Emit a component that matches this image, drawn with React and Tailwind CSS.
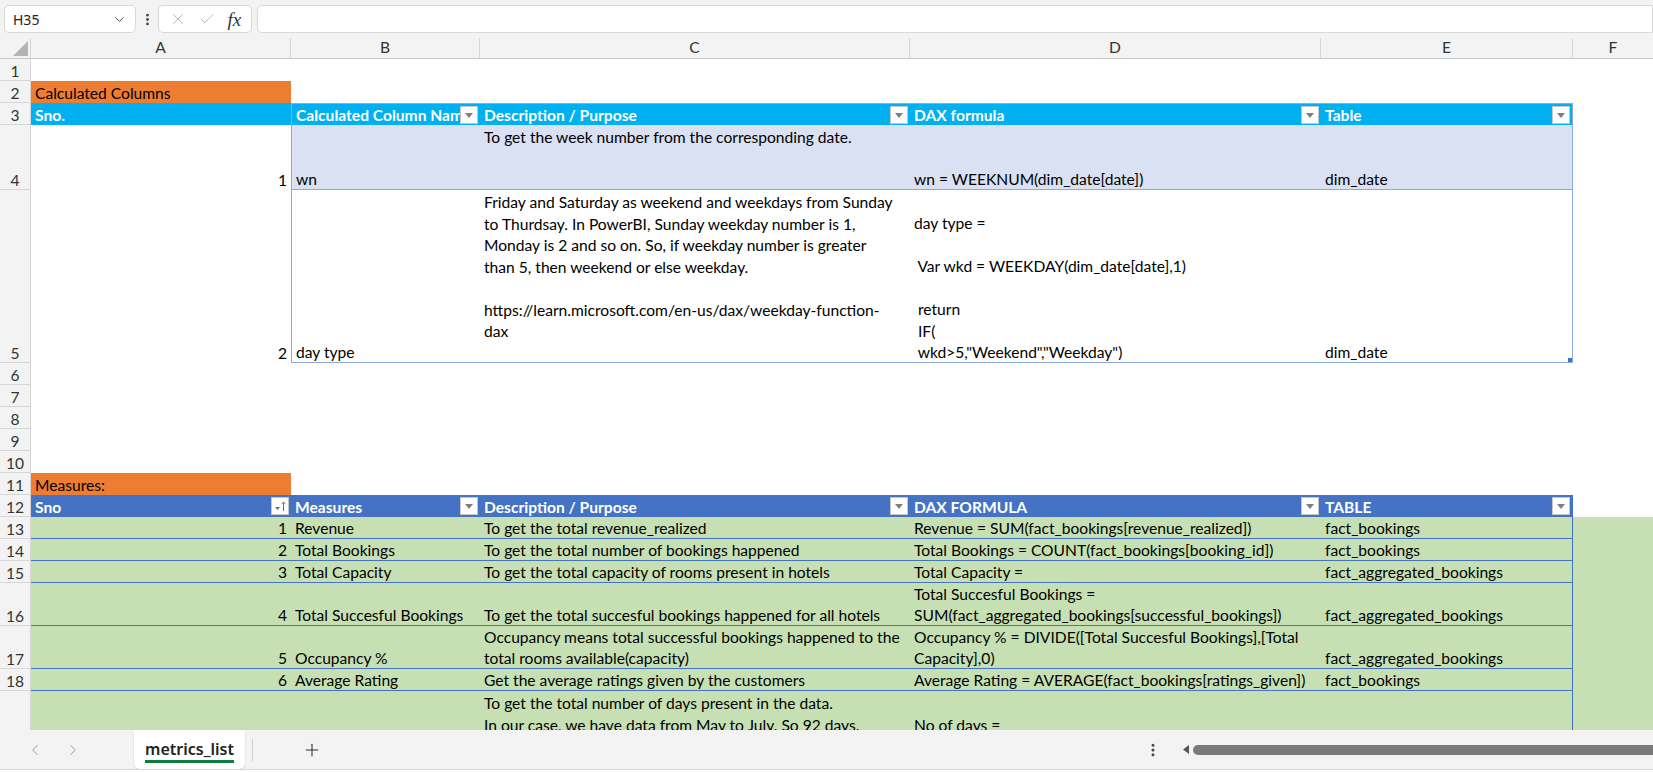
import React from 'react';
import { ChevronDown, EllipsisVertical, X, Check, ChevronLeft, ChevronRight, Plus } from 'lucide-react';

const cellFont = "font-['Lato',sans-serif] text-[15.6px]";

function FilterBtn({ sort }) {
  return (
    <span className="absolute right-[2px] top-[2px] w-[18px] h-[18px] bg-white border border-[#c6c6c6] flex items-center justify-center">
      {sort ? (
        <svg width="14" height="14" viewBox="0 0 14 14">
          <path d="M2 8h5l-2.5 3z" fill="#6f6f6f" />
          <path d="M10.5 12V3M8.8 4.8l1.7-1.8 1.7 1.8" stroke="#6f6f6f" strokeWidth="1" fill="none" />
        </svg>
      ) : (
        <svg width="8" height="5" viewBox="0 0 8 5">
          <path d="M0 0h8L4 5z" fill="#7f7f7f" />
        </svg>
      )}
    </span>
  );
}

function Cell({ w, lines = [''], right, top, className = '', children }) {
  return (
    <div
      className={`relative shrink-0 h-full overflow-hidden flex flex-col ${top ? 'justify-start' : 'justify-end'} ${right ? 'items-end' : 'items-start'} px-[4px] ${w} ${className}`}
    >
      {lines.map((l, i) => (
        <div key={i} className="h-[21.6px] leading-[25.5px] whitespace-pre">
          {l}
        </div>
      ))}
      {children}
    </div>
  );
}

function Row({ n, h, children, className = '' }) {
  return (
    <div className={`flex shrink-0 ${h} ${className}`}>
      <div className="w-[31px] shrink-0 h-full bg-[#f3f3f3] border-r border-b border-[#d6d6d6] flex items-end justify-center text-[#333] leading-[17px]">
        {n}
      </div>
      {children}
    </div>
  );
}

const measures = [
  { n: 13, h: 'h-[22px]', a: '1', b: 'Revenue', c: ['To get the total revenue_realized'], d: ['Revenue = SUM(fact_bookings[revenue_realized])'], e: 'fact_bookings' },
  { n: 14, h: 'h-[22px]', a: '2', b: 'Total Bookings', c: ['To get the total number of bookings happened'], d: ['Total Bookings = COUNT(fact_bookings[booking_id])'], e: 'fact_bookings' },
  { n: 15, h: 'h-[22px]', a: '3', b: 'Total Capacity', c: ['To get the total capacity of rooms present in hotels'], d: ['Total Capacity ='], e: 'fact_aggregated_bookings' },
  { n: 16, h: 'h-[43px]', a: '4', b: 'Total Succesful Bookings', c: ['To get the total succesful bookings happened for all hotels'], d: ['Total Succesful Bookings =', 'SUM(fact_aggregated_bookings[successful_bookings])'], e: 'fact_aggregated_bookings' },
  { n: 17, h: 'h-[43px]', a: '5', b: 'Occupancy %', c: ['Occupancy means total successful bookings happened to the', 'total rooms available(capacity)'], d: ['Occupancy % = DIVIDE([Total Succesful Bookings],[Total', 'Capacity],0)'], e: 'fact_aggregated_bookings' },
  { n: 18, h: 'h-[22px]', a: '6', b: 'Average Rating', c: ['Get the average ratings given by the customers'], d: ['Average Rating = AVERAGE(fact_bookings[ratings_given])'], e: 'fact_bookings' },
];

export default function App() {
  return (
    <div className="w-[1653px] h-[772px] overflow-hidden flex flex-col bg-white">
      {/* formula bar */}
      <div className="h-[38px] shrink-0 bg-[#f3f3f3] flex items-center pl-[4px] font-['Noto_Sans',sans-serif] text-[14px] text-[#222]">
        <div className="w-[132px] h-[28px] bg-white border border-[#d9d9d9] rounded-[5px] flex items-center justify-between pl-[8px] pr-[8px]">
          <span>H35</span>
          <ChevronDown size={15} strokeWidth={1.6} className="text-[#444]" />
        </div>
        <div className="w-[22px] flex justify-center">
          <EllipsisVertical size={15} strokeWidth={2.5} className="text-[#444]" />
        </div>
        <div className="w-[94px] h-[28px] bg-white border border-[#d9d9d9] rounded-[5px] flex items-center justify-around px-[4px]">
          <X size={18} strokeWidth={1.2} className="text-[#b0b0b0]" />
          <Check size={18} strokeWidth={1.2} className="text-[#b0b0b0]" />
          <span className="font-['Liberation_Serif',serif] italic text-[19px] text-[#333] leading-none">fx</span>
        </div>
        <div className="flex-1 h-[28px] ml-[5px] bg-white border border-[#d9d9d9] rounded-l-[5px]" />
      </div>

      {/* column headers */}
      <div className={`h-[21px] shrink-0 flex bg-[#f3f3f3] border-b border-[#c8c8c8] text-[#333] ${cellFont}`}>
        <div className="w-[31px] shrink-0 border-r border-[#d6d6d6] relative">
          <svg className="absolute right-[2px] bottom-[2px]" width="15" height="15" viewBox="0 0 15 15">
            <path d="M15 0V15H0z" fill="#b4b4b4" />
          </svg>
        </div>
        <div className="w-[260px] shrink-0 border-r border-[#d6d6d6] flex items-center justify-center">A</div>
        <div className="w-[189px] shrink-0 border-r border-[#d6d6d6] flex items-center justify-center">B</div>
        <div className="w-[430px] shrink-0 border-r border-[#d6d6d6] flex items-center justify-center">C</div>
        <div className="w-[411px] shrink-0 border-r border-[#d6d6d6] flex items-center justify-center">D</div>
        <div className="w-[252px] shrink-0 border-r border-[#d6d6d6] flex items-center justify-center">E</div>
        <div className="flex-1 flex items-center justify-center">F</div>
      </div>

      {/* sheet */}
      <div className={`flex-1 overflow-hidden flex flex-col text-black ${cellFont}`}>
        <Row n="1" h="h-[22px]" />
        <Row n="2" h="h-[22px]">
          <Cell w="w-[260px]" className="bg-[#ED7D31]" lines={['Calculated Columns']} />
        </Row>
        <Row n="3" h="h-[22px]">
          <Cell w="w-[260px]" className="bg-[#00B0F0] text-white font-bold" lines={['Sno.']} />
          <Cell w="w-[189px]" className="bg-[#00B0F0] text-white font-bold border-t border-l border-[#8EA9DB]" lines={['Calculated Column Name']}>
            <FilterBtn />
          </Cell>
          <Cell w="w-[430px]" className="bg-[#00B0F0] text-white font-bold border-t border-[#8EA9DB]" lines={['Description / Purpose']}>
            <FilterBtn />
          </Cell>
          <Cell w="w-[411px]" className="bg-[#00B0F0] text-white font-bold border-t border-[#8EA9DB]" lines={['DAX formula']}>
            <FilterBtn />
          </Cell>
          <Cell w="w-[252px]" className="bg-[#00B0F0] text-white font-bold border-t border-r border-[#8EA9DB]" lines={['Table']}>
            <FilterBtn />
          </Cell>
        </Row>
        <Row n="4" h="h-[65px]">
          <Cell w="w-[260px]" right lines={['1']} />
          <Cell w="w-[189px]" className="bg-[#D9E1F2] border-l border-b border-[#8EA9DB]" lines={['wn']} />
          <Cell w="w-[430px]" className="bg-[#D9E1F2] border-b border-[#8EA9DB]" lines={['To get the week number from the corresponding date.', '', '']} />
          <Cell w="w-[411px]" className="bg-[#D9E1F2] border-b border-[#8EA9DB]" lines={['wn = WEEKNUM(dim_date[date])']} />
          <Cell w="w-[252px]" className="bg-[#D9E1F2] border-b border-r border-[#8EA9DB]" lines={['dim_date']} />
        </Row>
        <Row n="5" h="h-[173px]">
          <Cell w="w-[260px]" right lines={['2']} />
          <Cell w="w-[189px]" className="border-l border-b border-[#8EA9DB]" lines={['day type']} />
          <Cell
            w="w-[430px]"
            className="border-b border-[#8EA9DB]"
            lines={[
              'Friday and Saturday as weekend and weekdays from Sunday',
              'to Thurdsay. In PowerBI, Sunday weekday number is 1,',
              'Monday is 2 and so on. So, if weekday number is greater',
              'than 5, then weekend or else weekday.',
              '',
              'https://learn.microsoft.com/en-us/dax/weekday-function-',
              'dax',
              '',
            ]}
          />
          <Cell
            w="w-[411px]"
            className="border-b border-[#8EA9DB]"
            lines={['', 'day type =', '', ' Var wkd = WEEKDAY(dim_date[date],1)', '', ' return', ' IF(', ' wkd>5,"Weekend","Weekday")']}
          />
          <Cell w="w-[252px]" className="border-b border-r border-[#8EA9DB]" lines={['dim_date']}>
            <span className="absolute right-0 bottom-0 w-[4px] h-[4px] bg-[#4472C4]" />
          </Cell>
        </Row>
        <Row n="6" h="h-[22px]" />
        <Row n="7" h="h-[22px]" />
        <Row n="8" h="h-[22px]" />
        <Row n="9" h="h-[22px]" />
        <Row n="10" h="h-[22px]" />
        <Row n="11" h="h-[22px]">
          <Cell w="w-[260px]" className="bg-[#ED7D31]" lines={['Measures:']} />
        </Row>
        <Row n="12" h="h-[22px]">
          <Cell w="w-[260px]" className="bg-[#4472C4] text-white font-bold" lines={['Sno']}>
            <FilterBtn sort />
          </Cell>
          <Cell w="w-[189px]" className="bg-[#4472C4] text-white font-bold" lines={['Measures']}>
            <FilterBtn />
          </Cell>
          <Cell w="w-[430px]" className="bg-[#4472C4] text-white font-bold" lines={['Description / Purpose']}>
            <FilterBtn />
          </Cell>
          <Cell w="w-[411px]" className="bg-[#4472C4] text-white font-bold" lines={['DAX FORMULA']}>
            <FilterBtn />
          </Cell>
          <Cell w="w-[252px]" className="bg-[#4472C4] text-white font-bold border-r border-[#4472C4]" lines={['TABLE']}>
            <FilterBtn />
          </Cell>
        </Row>
        {measures.map((m) => (
          <Row key={m.n} n={String(m.n)} h={m.h}>
            <Cell w="w-[260px]" right className="bg-[#C6E0B4] border-b border-[#4472C4]" lines={[m.a]} />
            <Cell w="w-[189px]" className="bg-[#C6E0B4] border-b border-[#4472C4]" lines={[m.b]} />
            <Cell w="w-[430px]" className="bg-[#C6E0B4] border-b border-[#4472C4]" lines={m.c} />
            <Cell w="w-[411px]" className="bg-[#C6E0B4] border-b border-[#4472C4]" lines={m.d} />
            <Cell w="w-[252px]" className="bg-[#C6E0B4] border-b border-r border-[#4472C4]" lines={[m.e]} />
            <div className="flex-1 bg-[#C6E0B4]" />
          </Row>
        ))}
        <Row n="" h="h-[90px]">
          <Cell w="w-[260px]" className="bg-[#C6E0B4]" />
          <Cell w="w-[189px]" className="bg-[#C6E0B4]" />
          <Cell
            w="w-[430px]"
            top
            className="bg-[#C6E0B4]"
            lines={['To get the total number of days present in the data.', 'In our case, we have data from May to July. So 92 days.']}
          />
          <Cell w="w-[411px]" top className="bg-[#C6E0B4]" lines={['', 'No of days =']} />
          <Cell w="w-[252px]" className="bg-[#C6E0B4] border-r border-[#4472C4]" />
          <div className="flex-1 bg-[#C6E0B4]" />
        </Row>
      </div>

      {/* sheet tabs */}
      <div className="h-[39px] shrink-0 bg-[#f3f3f3] flex items-center font-['Noto_Sans',sans-serif] text-[#222]">
        <ChevronLeft size={18} strokeWidth={1.3} className="ml-[26px] text-[#9a9a9a]" />
        <ChevronRight size={18} strokeWidth={1.3} className="ml-[20px] text-[#9a9a9a]" />
        <div className="ml-[52px] w-[111px] h-full bg-white rounded-b-[6px] shadow-[0_1px_2px_rgba(0,0,0,0.15)] flex items-center justify-center">
          <span className="text-[16px] font-semibold leading-[20px] border-b-[3px] border-[#107C41] pb-[1px] mt-[2px]">metrics_list</span>
        </div>
        <div className="ml-[7px] w-px h-[22px] bg-[#d0d0d0]" />
        <Plus size={20} strokeWidth={1.3} className="ml-[49px] text-[#333]" />
        <div className="flex-1" />
        <EllipsisVertical size={16} strokeWidth={2.5} className="text-[#444]" />
        <svg className="ml-[22px]" width="6" height="9" viewBox="0 0 6 9">
          <path d="M6 0v9L0 4.5z" fill="#555" />
        </svg>
        <div className="ml-[4px] w-[460px] h-[10px] rounded-l-full bg-[#7a7a7a]" />
      </div>
      <div className="h-[3px] shrink-0 bg-white border-t border-[#d6d6d6]" />
    </div>
  );
}
